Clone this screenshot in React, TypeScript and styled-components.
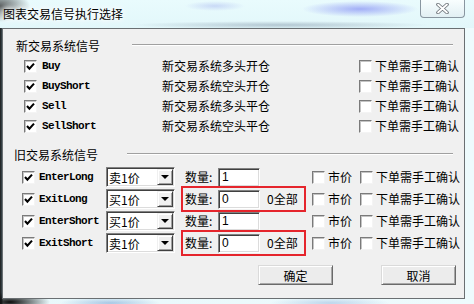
import React from 'react';
import styled, { createGlobalStyle } from 'styled-components';

const GlobalStyle = createGlobalStyle`
  html, body {
    margin: 0;
    padding: 0;
  }
  body {
    width: 474px;
    height: 304px;
    overflow: hidden;
    font-family: "Noto Sans CJK SC", "Liberation Sans", sans-serif;
    color: #000;
  }
`;

const Frame = styled.div`
  width: 474px;
  height: 304px;
  display: flex;
  flex-direction: column;
  background:
    radial-gradient(ellipse 40px 10px at 10px 302px, #0c0c0c, transparent),
    radial-gradient(ellipse 50px 6px at 110px 303px, rgba(90, 140, 200, 0.45), transparent),
    radial-gradient(ellipse 60px 6px at 330px 303px, rgba(120, 160, 210, 0.4), transparent),
    linear-gradient(to right, #1c1c1c 0, #3c4a50 2px, #e8f8fb 3px, #eefbfd 100%);
`;

const TitleBar = styled.div`
  height: 28px;
  flex: none;
  display: flex;
  align-items: flex-start;
  justify-content: space-between;
  background:
    radial-gradient(ellipse 30px 16px at 0px 6px, rgba(40, 40, 40, 0.75), transparent),
    radial-gradient(ellipse 58px 8px at 360px 9px, rgba(140, 150, 245, 0.75), transparent),
    radial-gradient(ellipse 30px 5px at 215px 6px, rgba(170, 185, 240, 0.5), transparent),
    radial-gradient(ellipse 150px 4px at 280px 25px, rgba(120, 140, 160, 0.45), transparent),
    linear-gradient(#e9fbfd, #e2f7fa);
`;

const Title = styled.div`
  padding: 6px 0 0 3px;
  font-size: 12px;
  line-height: 16px;
  text-shadow: 0 0 4px #fff, 0 0 6px #fff, 0 0 8px #fff;
`;

const CloseButton = styled.div`
  width: 45px;
  height: 18px;
  margin-right: 9px;
  box-sizing: border-box;
  border: 1px solid #8996a0;
  border-top: none;
  border-radius: 0 0 4px 4px;
  background: linear-gradient(rgba(255, 255, 255, 0.7), rgba(225, 236, 240, 0.7));
  display: flex;
  align-items: center;
  justify-content: center;
`;

const Client = styled.div`
  margin-left: 2px;
  width: 463px;
  height: 271px;
  box-sizing: border-box;
  border: 1px solid #6a6f72;
  background: #f0f0f0;
  padding-top: 9px;
  font-size: 12px;
  flex: none;
`;

const Header = styled.div<{ $indent: number; $labelWidth: number }>`
  display: flex;
  align-items: flex-start;
  height: 16px;
  line-height: 16px;
  padding: 0 11px 0 ${({ $indent }) => $indent}px;

  & > span {
    width: ${({ $labelWidth }) => $labelWidth}px;
    flex: none;
  }
`;

const EtchedLine = styled.div`
  flex: 1;
  margin-top: 6px;
  border-top: 1px solid #a0a0a0;
  border-bottom: 1px solid #fff;
`;

const NewList = styled.div`
  margin-top: 2px;
  margin-bottom: 11px;
`;

const NewRow = styled.div`
  display: flex;
  align-items: center;
  height: 20px;
  padding-left: 21px;
`;

const OldList = styled.div`
  margin-top: 3px;
`;

const OldRow = styled.div`
  display: flex;
  align-items: center;
  height: 22px;
  padding-left: 19px;
`;

const Box = styled.div<{ $gap?: number }>`
  width: 13px;
  height: 13px;
  flex: none;
  box-sizing: border-box;
  border: 1px solid;
  border-color: #7a7a7a #f4f4f4 #f4f4f4 #7a7a7a;
  box-shadow: inset 1px 1px 0 #c4c4c4;
  background: #fff;
  margin-left: ${({ $gap }) => $gap ?? 0}px;
  display: flex;
  align-items: center;
  justify-content: center;
`;

const SignalName = styled.span<{ $width: number; $gap: number }>`
  width: ${({ $width }) => $width}px;
  margin-left: ${({ $gap }) => $gap}px;
  flex: none;
  font-family: "Liberation Mono", monospace;
  font-weight: bold;
  font-size: 11px;
  letter-spacing: -0.6px;
  line-height: 14px;
`;

const Text = styled.span<{ $width?: number; $gap?: number }>`
  ${({ $width }) => ($width ? `width: ${$width}px;` : '')}
  margin-left: ${({ $gap }) => $gap ?? 0}px;
  flex: none;
  line-height: 16px;
  white-space: nowrap;
`;

const Combo = styled.div`
  width: 69px;
  height: 20px;
  flex: none;
  box-sizing: border-box;
  border: 1px solid;
  border-color: #828282 #fff #fff #828282;
  box-shadow: inset 1px 1px 0 #404040, inset -1px -1px 0 #dcdcdc;
  background: #fff;
  display: flex;
  align-items: stretch;
  padding: 1px;
`;

const ComboText = styled.span`
  flex: 1;
  padding-left: 1px;
  line-height: 17px;
  font-size: 12px;
`;

const ComboArrow = styled.div`
  width: 16px;
  box-sizing: border-box;
  border: 1px solid;
  border-color: #f0f0f0 #404040 #404040 #f0f0f0;
  box-shadow: inset 1px 1px 0 #fff, inset -1px -1px 0 #a0a0a0;
  background: #f0f0f0;
  display: flex;
  align-items: center;
  justify-content: center;

  &::after {
    content: '';
    border-left: 4px solid transparent;
    border-right: 4px solid transparent;
    border-top: 4px solid #000;
  }
`;

const QtyGroup = styled.div<{ $highlight: boolean }>`
  width: 125px;
  height: 26px;
  flex: none;
  margin-left: 6px;
  box-sizing: border-box;
  border: 2px solid ${({ $highlight }) => ($highlight ? '#e5252c' : 'transparent')};
  padding-left: 2px;
  display: flex;
  align-items: center;
`;

const QtyInput = styled.div`
  width: 42px;
  height: 19px;
  flex: none;
  box-sizing: border-box;
  border: 1px solid;
  border-color: #828282 #fff #fff #828282;
  box-shadow: inset 1px 1px 0 #404040, inset -1px -1px 0 #dcdcdc;
  background: #fff;
  padding: 1px 0 0 3px;
  font-family: "Liberation Sans", sans-serif;
  font-size: 12px;
  line-height: 14px;
`;

const ButtonRow = styled.div`
  display: flex;
  justify-content: flex-end;
  gap: 48px;
  margin-top: 11px;
  padding-right: 8px;
`;

const Button = styled.div`
  width: 75px;
  height: 20px;
  box-sizing: border-box;
  border: 1px solid;
  border-color: #dadada #6a6a6a #6a6a6a #dadada;
  box-shadow: inset 1px 1px 0 #fff, inset -1px -1px 0 #a8a8a8;
  background: #ececec;
  display: flex;
  align-items: center;
  justify-content: center;
  font-size: 12px;
`;

const Check = () => (
  <svg width="9" height="9" viewBox="0 0 9 9">
    <path d="M1 4 L3.4 6.6 L8 1.6" fill="none" stroke="#000" strokeWidth="2.1" />
  </svg>
);

const CheckBox = ({ checked, gap }: { checked?: boolean; gap?: number }) => (
  <Box $gap={gap}>{checked && <Check />}</Box>
);

const newSignals = [
  { name: 'Buy', desc: '新交易系统多头开仓' },
  { name: 'BuyShort', desc: '新交易系统空头开仓' },
  { name: 'Sell', desc: '新交易系统多头平仓' },
  { name: 'SellShort', desc: '新交易系统空头平仓' },
];

const oldSignals = [
  { name: 'EnterLong', price: '卖1价', qty: '1', all: false },
  { name: 'ExitLong', price: '买1价', qty: '0', all: true },
  { name: 'EnterShort', price: '买1价', qty: '1', all: false },
  { name: 'ExitShort', price: '卖1价', qty: '0', all: true },
];

const App = () => {
  return (
    <>
      <GlobalStyle />
      <Frame>
        <TitleBar>
          <Title>图表交易信号执行选择</Title>
          <CloseButton>
            <svg width="13" height="11" viewBox="0 0 13 11">
              <path d="M2 1.5 L11 9.5 M11 1.5 L2 9.5" stroke="#6d747a" strokeWidth="3.6" strokeLinecap="round" />
              <path d="M2 1.5 L11 9.5 M11 1.5 L2 9.5" stroke="#fff" strokeWidth="1.8" strokeLinecap="round" />
            </svg>
          </CloseButton>
        </TitleBar>
        <Client>
          <Header $indent={13} $labelWidth={116}>
            <span>新交易系统信号</span>
            <EtchedLine />
          </Header>
          <NewList>
            {newSignals.map((s) => (
              <NewRow key={s.name}>
                <CheckBox checked />
                <SignalName $width={120} $gap={5}>{s.name}</SignalName>
                <Text $width={197}>{s.desc}</Text>
                <CheckBox />
                <Text $gap={3}>下单需手工确认</Text>
              </NewRow>
            ))}
          </NewList>
          <Header $indent={11} $labelWidth={113}>
            <span>旧交易系统信号</span>
            <EtchedLine />
          </Header>
          <OldList>
            {oldSignals.map((s) => (
              <OldRow key={s.name}>
                <CheckBox checked />
                <SignalName $width={67} $gap={4}>{s.name}</SignalName>
                <Combo>
                  <ComboText>{s.price}</ComboText>
                  <ComboArrow />
                </Combo>
                <QtyGroup $highlight={s.all}>
                  <Text $width={33}>数量:</Text>
                  <QtyInput>{s.qty}</QtyInput>
                  {s.all && <Text $gap={7}>0全部</Text>}
                </QtyGroup>
                <CheckBox gap={6} />
                <Text $width={24} $gap={3}>市价</Text>
                <CheckBox gap={8} />
                <Text $gap={3}>下单需手工确认</Text>
              </OldRow>
            ))}
          </OldList>
          <ButtonRow>
            <Button>确定</Button>
            <Button>取消</Button>
          </ButtonRow>
        </Client>
      </Frame>
    </>
  );
};

export default App;
